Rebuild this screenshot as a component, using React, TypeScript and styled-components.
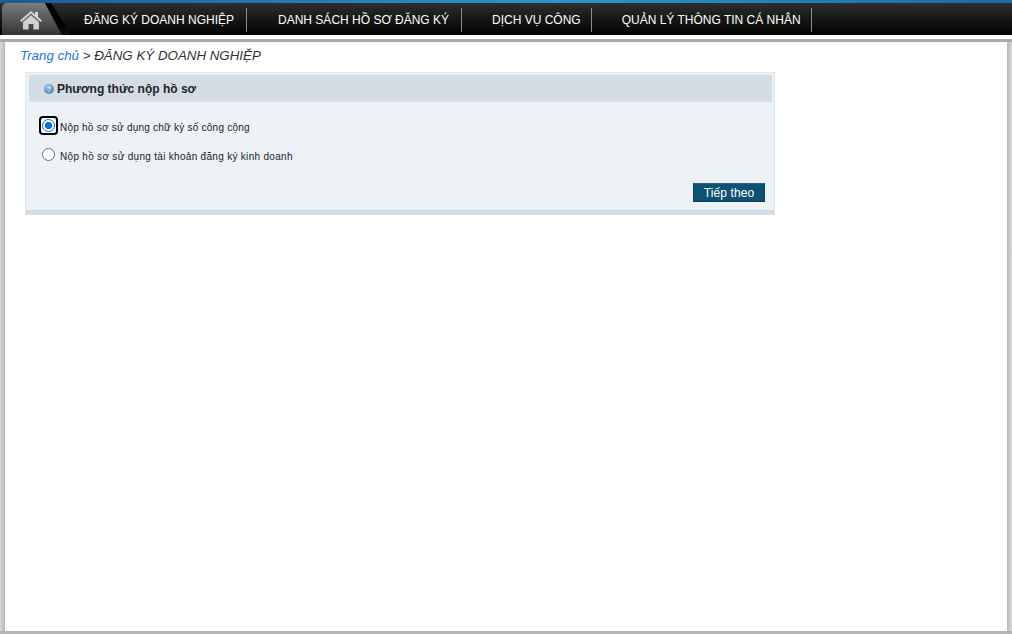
import React from "react";
import styled, { createGlobalStyle } from "styled-components";

const Global = createGlobalStyle`
  html, body { margin: 0; padding: 0; background: #fff; }
  body { font-family: "Liberation Sans", Arial, sans-serif; }
  #root { height: 634px; overflow: hidden; }
`;

const Page = styled.div`
  width: 1012px;
  height: 634px;
  display: flex;
  flex-direction: column;
  background: #fff;
`;

const Stripe = styled.div`
  height: 3px;
  flex: none;
  background: linear-gradient(to right, #1a5c96, #2d94cf 55%, #1a6aa6);
`;

const NavBar = styled.nav`
  height: 32px;
  background: linear-gradient(#2e2e2e, #000);
  display: flex;
  align-items: stretch;
  flex: none;
`;

const HomeSlot = styled.div`
  position: relative;
  width: 62px;
  margin-left: 2px;
  flex: none;

  &::after {
    content: "";
    position: absolute;
    top: 0;
    left: 0;
    width: 72px;
    height: 100%;
    background: linear-gradient(#000, #000 70%, #111);
    clip-path: polygon(43px 0, 49px 0, 69px 100%, 60px 100%);
  }
`;

const HomeTab = styled.a`
  height: 100%;
  display: flex;
  align-items: center;
  padding: 2px 0 0 17px;
  box-sizing: border-box;
  background: linear-gradient(#7c7c7c, #333);
  border-top-left-radius: 5px;
  clip-path: polygon(0 0, 43px 0, 60px 100%, 0 100%);
`;

const NavItem = styled.a<{ $pad: number; $end: number }>`
  display: flex;
  align-items: center;
  height: 24px;
  margin-top: 5px;
  padding: 0 ${(p) => p.$end}px 0 ${(p) => p.$pad}px;
  border-right: 1px solid #8c8c8c;
  color: #fff;
  font-size: 12px;
  white-space: nowrap;
`;

const Gap = styled.div`
  height: 4px;
  flex: none;
  background: #fff;
`;

const Frame = styled.main`
  flex: 1;
  min-height: 0;
  border-top: 3px solid #aaa;
  border-bottom: 3px solid #b4b4b4;
  display: flex;
  background: #fff;
`;

const Gutter = styled.div<{ $w: number; $dir: string }>`
  width: ${(p) => p.$w}px;
  flex: none;
  background: linear-gradient(${(p) => p.$dir}, #d8d8d8, #b8b8b8);
`;

const Content = styled.div`
  flex: 1;
  min-width: 0;
  padding: 6px 0 0 15px;
`;

const Crumbs = styled.div`
  font-size: 13.33px;
  line-height: 16px;
  font-style: italic;
  color: #333;
  margin-bottom: 8px;
`;

const CrumbLink = styled.a`
  color: #1a73e8;
`;

const Panel = styled.section`
  width: 750px;
  margin-left: 5px;
  box-sizing: border-box;
  background: #edf2f7;
  border: 1px solid #dfe6ec;
  border-bottom: 5px solid #d4dde5;
  padding: 2px 2px 0 3px;
`;

const PanelHead = styled.h2`
  margin: 0;
  height: 27px;
  background: #d4dde5;
  display: flex;
  align-items: center;
  gap: 3px;
  padding-left: 15px;
  font-size: 12px;
  font-weight: bold;
  color: #222;
`;

const Options = styled.div`
  padding: 15px 0 0 13px;
  display: flex;
  flex-direction: column;
  gap: 9px;
`;

const Option = styled.label<{ $track: number }>`
  display: flex;
  align-items: center;
  height: 20px;
  font-size: 10px;
  letter-spacing: ${(p) => p.$track}px;
  color: #222;
`;

const Radio = styled.span`
  width: 13px;
  height: 13px;
  box-sizing: border-box;
  margin: -3px 5px 0 0;
  border-radius: 50%;
  flex: none;
  background: #fff;
  border: 1px solid #6f6f6f;
`;

const RadioFocus = styled.span`
  display: flex;
  width: 19px;
  height: 19px;
  margin: -3px 2px 0 -3px;
  box-sizing: border-box;
  border: 2.5px solid #000;
  border-radius: 4px;
  background: #fff;
  flex: none;
  align-items: center;
  justify-content: center;
`;

const RadioOn = styled(Radio)`
  margin: 0;
  border: 1.5px solid #0b6fe0;
  background: radial-gradient(circle, #0b6fe0 0 3.4px, #fff 3.9px);
`;

const Actions = styled.div`
  display: flex;
  justify-content: flex-end;
  padding: 17px 7px 8px 0;
`;

const Button = styled.button`
  width: 72px;
  height: 19px;
  padding: 0;
  background: #0e5273;
  border: 1px solid #0a3f5a;
  border-top-color: #2c5f88;
  color: #fff;
  font-family: "Liberation Sans", Arial, sans-serif;
  font-size: 12px;
  letter-spacing: 0.1px;
  line-height: 16px;
`;

const HomeIcon = () => (
  <svg width="24" height="20" viewBox="0 0 24 20" aria-hidden="true">
    <path d="M1 10.5 12 1l4 3.4V2h3v5l4 3.5-1.4 1.5L12 3.6 2.4 12z" fill="#d6d6d6" />
    <path d="M4 12 12 5.2l8 6.8v7.6h-5.6V14H9.6v5.6H4z" fill="#cfcfcf" />
  </svg>
);

const HelpIcon = () => (
  <svg width="10" height="10" viewBox="0 0 10 10" aria-hidden="true">
    <defs>
      <radialGradient id="q" cx="40%" cy="30%" r="75%">
        <stop offset="0" stopColor="#a5c8ea" />
        <stop offset="1" stopColor="#3f7fbd" />
      </radialGradient>
    </defs>
    <circle cx="5" cy="5" r="5" fill="url(#q)" />
    <path d="M3.6 3.8C3.8 2.6 6.4 2.6 6.4 4 6.4 5 5 5 5 6.2" fill="none" stroke="#e8f1fa" strokeWidth="1" />
    <circle cx="5" cy="7.8" r=".6" fill="#e8f1fa" />
  </svg>
);

export default function App() {
  return (
    <Page>
      <Global />
      <Stripe />
      <NavBar>
        <HomeSlot>
          <HomeTab>
            <HomeIcon />
          </HomeTab>
        </HomeSlot>
        <NavItem $pad={20} $end={12}>ĐĂNG KÝ DOANH NGHIỆP</NavItem>
        <NavItem $pad={31} $end={12}>DANH SÁCH HỒ SƠ ĐĂNG KÝ</NavItem>
        <NavItem $pad={30} $end={10}>DỊCH VỤ CÔNG</NavItem>
        <NavItem $pad={30} $end={10}>QUẢN LÝ THÔNG TIN CÁ NHÂN</NavItem>
      </NavBar>
      <Gap />
      <Frame>
        <Gutter $w={5} $dir="to right" />
        <Content>
          <Crumbs>
            <CrumbLink>Trang chủ</CrumbLink> &gt; ĐĂNG KÝ DOANH NGHIỆP
          </Crumbs>
          <Panel>
            <PanelHead>
              <HelpIcon />
              Phương thức nộp hồ sơ
            </PanelHead>
            <Options>
              <Option $track={0.235}>
                <RadioFocus>
                  <RadioOn />
                </RadioFocus>
                Nộp hồ sơ sử dụng chữ ký số công cộng
              </Option>
              <Option $track={0.3}>
                <Radio />
                Nộp hồ sơ sử dụng tài khoản đăng ký kinh doanh
              </Option>
            </Options>
            <Actions>
              <Button>Tiếp theo</Button>
            </Actions>
          </Panel>
        </Content>
        <Gutter $w={5} $dir="to left" />
      </Frame>
    </Page>
  );
}
